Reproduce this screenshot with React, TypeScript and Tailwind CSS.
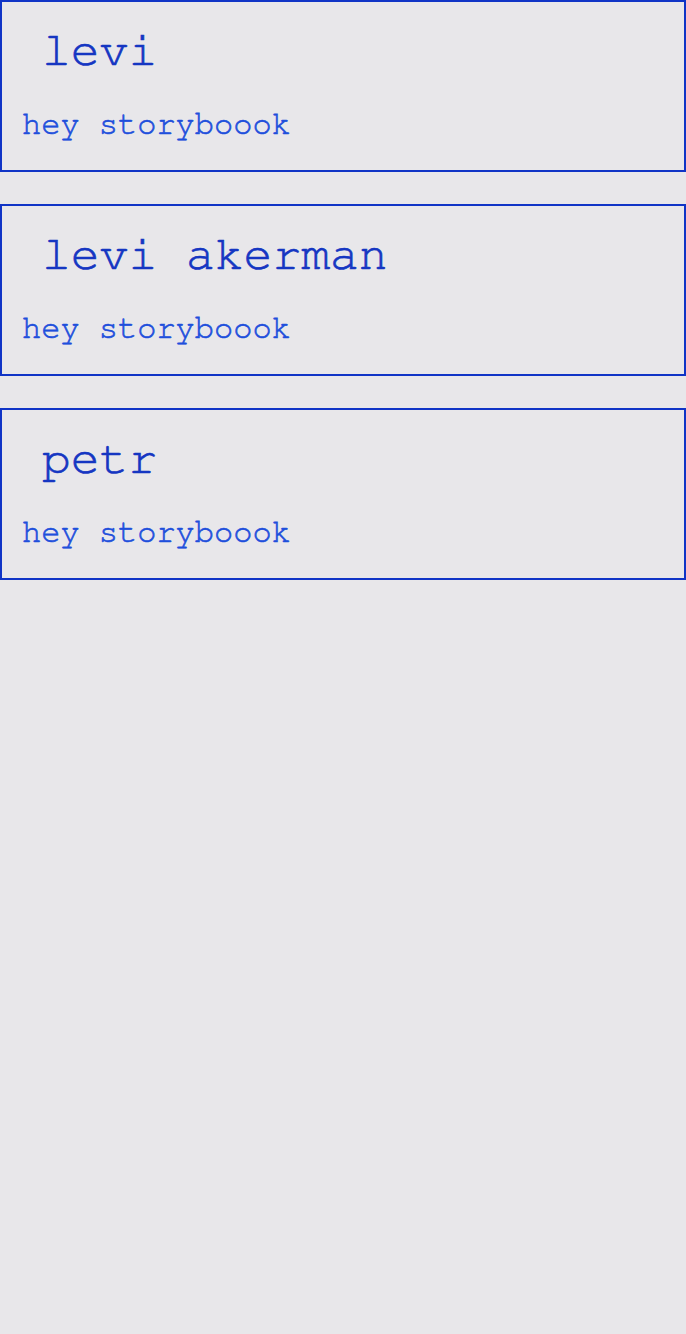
const users = [
  { name: "levi", message: "hey storyboook" },
  { name: "levi akerman", message: "hey storyboook" },
  { name: "petr", message: "hey storyboook" },
];

function UserCard({ name, message }: { name: string; message: string }) {
  return (
    <div className="mb-8 border-2 border-[#1034c6] px-5 pt-[25px] pb-[30px]">
      <h1 className="ml-5 text-[48px] leading-[48px] text-[#1536c2] [-webkit-text-stroke:0.7px_#1536c2]">
        {name}
      </h1>
      <p className="mt-[33px] text-[32px] leading-[32px] text-[#1e4fdc] [-webkit-text-stroke:0.6px_#1e4fdc]">
        {message}
      </p>
    </div>
  );
}

export default function App() {
  return (
    <div
      className="min-h-[1334px] w-full bg-[#e8e7ea]"
      style={{ fontFamily: '"Nimbus Mono PS", "Nimbus Mono L", FreeMono, Courier, "Liberation Mono", monospace' }}
    >
      {users.map((u) => (
        <UserCard key={u.name} name={u.name} message={u.message} />
      ))}
    </div>
  );
}
